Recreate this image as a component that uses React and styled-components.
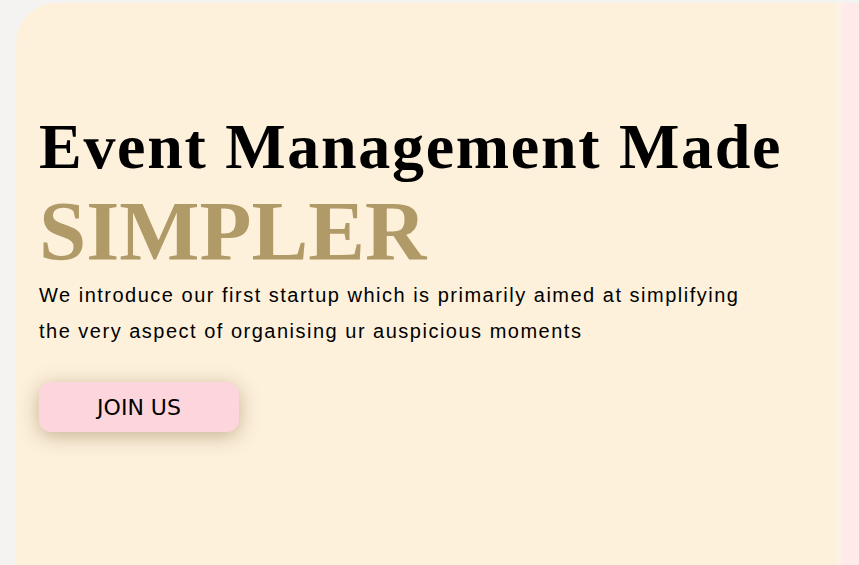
import React from 'react';
import styled, {createGlobalStyle} from 'styled-components';

const GlobalStyle = createGlobalStyle`
  html, body {
    margin: 0;
    padding: 0;
    background: #f4f3f1;
    overflow: hidden;
  }
`;

const Page = styled.div`
  display: flex;
  height: 565px;
  padding: 3px 0 0 16px;
  box-sizing: border-box;
  overflow: hidden;
`;

const Slide = styled.section`
  flex: 0 0 ${p => p.width}px;
  background: ${p => p.bg};
  border-radius: 40px 0 0 0;
  box-sizing: border-box;
  padding: 109px 0 0 23px;
`;

const NextSlide = styled.div`
  flex: 1;
  background: linear-gradient(90deg, #fdf0de 0px, #fdf3e6 4px, #fdeae9 10px);
`;

const Title = styled.h1`
  margin: 0;
  font-family: "Liberation Serif", "Times New Roman", serif;
  font-weight: 700;
  font-size: 64px;
  line-height: 70px;
  letter-spacing: 1.7px;
  color: #000;
`;

const Accent = styled.div`
  font-family: "Liberation Serif", "Times New Roman", serif;
  font-weight: 700;
  font-size: 85px;
  line-height: 86px;
  letter-spacing: 0;
  color: #b09a67;
  margin-top: 6px;
`;

const Intro = styled.p`
  margin: 3px 0 0;
  max-width: 720px;
  font-family: "Liberation Sans", Arial, sans-serif;
  font-size: 20px;
  line-height: 36px;
  letter-spacing: 1.5px;
  color: #000;
`;

const JoinButton = styled.button`
  margin-top: 33px;
  width: 200px;
  height: 50px;
  border: none;
  border-radius: 12px;
  background: #fcd6dc;
  box-shadow: 0 4px 20px rgba(130, 100, 60, 0.45);
  font-family: "DejaVu Sans", Tahoma, sans-serif;
  font-size: 22px;
  color: #000;
  cursor: pointer;
`;

export default function App() {
  return (
    <>
      <GlobalStyle />
      <Page>
        <Slide width={818} bg="#fdf1dc">
          <Title>Event Management Made</Title>
          <Accent>SIMPLER</Accent>
          <Intro>
            We introduce our first startup which is primarily aimed at simplifying the very aspect of organising ur auspicious moments
          </Intro>
          <JoinButton>JOIN US</JoinButton>
        </Slide>
        <NextSlide />
      </Page>
    </>
  );
}
